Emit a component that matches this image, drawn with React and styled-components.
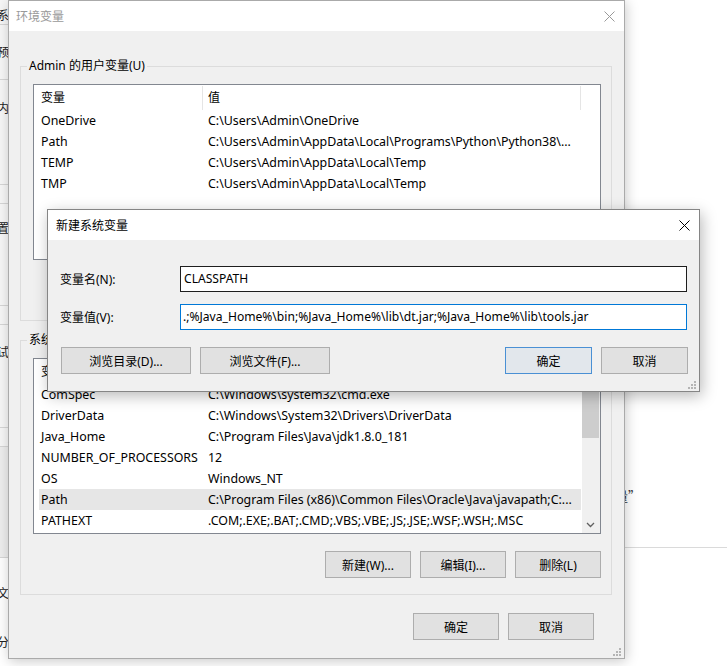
import React from "react";
import styled, { createGlobalStyle } from "styled-components";

const FONT = `"Noto Sans", "Noto Sans CJK SC", sans-serif`;

const GlobalStyle = createGlobalStyle`
  html, body { margin: 0; padding: 0; }
  body {
    background: #ffffff;
    font-family: ${FONT};
    font-size: 12px;
    color: #000;
  }
  * { box-sizing: border-box; }
`;

const Desktop = styled.div`
  position: relative;
  width: 727px;
  height: 666px;
  overflow: hidden;
  background: #ffffff;
`;

/* ---------- window behind everything ---------- */
const BackStrip = styled.div`
  position: absolute;
  left: -3px;
  top: 0;
  width: 40px;
  height: 666px;
  display: flex;
  flex-direction: column;
  font-family: "Noto Sans CJK SC", sans-serif;
  font-size: 12px;
  color: #222;
`;

const StripRow = styled.div`
  height: ${(p) => p.$h}px;
  flex-shrink: 0;
  padding-top: ${(p) => p.$pad || 0}px;
  line-height: 14px;
  background: ${(p) => p.$bg || "#f7f7f7"};
  border-bottom: ${(p) => (p.$line ? "1px solid #d6d6d6" : "none")};
  display: flex;
  flex-direction: column;
  gap: ${(p) => p.$gap || 0}px;
`;

const BackText = styled.div`
  position: absolute;
  left: 615px;
  top: 486px;
  font-family: "Noto Sans CJK SC", sans-serif;
  font-size: 13px;
  color: #333;
`;

const BackLine = styled.div`
  position: absolute;
  left: 600px;
  top: 547px;
  width: 140px;
  height: 1px;
  background: #dadada;
`;

/* ---------- windows ---------- */
const Window = styled.div`
  position: absolute;
  left: ${(p) => p.$x}px;
  top: ${(p) => p.$y}px;
  width: ${(p) => p.$w}px;
  height: ${(p) => p.$h}px;
  display: flex;
  flex-direction: column;
  background: #f0f0f0;
  border: 1px solid ${(p) => (p.$active ? "#858585" : "#aaaaaa")};
  box-shadow: ${(p) =>
    p.$active
      ? "2px 4px 14px rgba(0,0,0,0.28)"
      : "1px 2px 12px rgba(0,0,0,0.22)"};
`;

const TitleBar = styled.div`
  height: ${(p) => p.$h}px;
  flex-shrink: 0;
  background: #ffffff;
  display: flex;
  align-items: center;
  padding-left: ${(p) => p.$pad}px;
`;

const TitleText = styled.div`
  flex: 1;
  font-size: 12px;
  color: ${(p) => (p.$active ? "#000" : "#999")};
`;

const CloseBtn = styled.div`
  width: 30px;
  height: 100%;
  display: flex;
  align-items: center;
  justify-content: center;
`;

const CloseIcon = ({ color }) => (
  <svg width="11" height="11" viewBox="0 0 11 11">
    <path d="M0.5 0.5 L10.5 10.5 M10.5 0.5 L0.5 10.5" stroke={color} strokeWidth="1" fill="none" />
  </svg>
);

const Grip = styled.div`
  position: absolute;
  right: ${(p) => p.$r}px;
  bottom: ${(p) => p.$b}px;
  width: 8px;
  height: 8px;
  display: flex;
`;

const GripIcon = () => (
  <svg width="8" height="8" viewBox="0 0 8 8">
    <g fill="#b4b4b4">
      <rect x="6" y="0" width="2" height="2" />
      <rect x="3" y="3" width="2" height="2" />
      <rect x="6" y="3" width="2" height="2" />
      <rect x="0" y="6" width="2" height="2" />
      <rect x="3" y="6" width="2" height="2" />
      <rect x="6" y="6" width="2" height="2" />
    </g>
  </svg>
);

/* ---------- outer window body ---------- */
const OuterBody = styled.div`
  flex: 1;
  display: flex;
  flex-direction: column;
  padding: 27px 12px 0 11px;
`;

const Group = styled.fieldset`
  margin: ${(p) => p.$mt || 0}px 0 0 0;
  padding: 10px 10px ${(p) => p.$pb}px 12px;
  border: 1px solid #dcdcdc;
  min-width: 0;
  display: flex;
  flex-direction: column;
`;

const Legend = styled.legend`
  margin-left: -6px;
  padding: 0 2px;
  line-height: 16px;
  font-size: 12px;
  color: #000;
`;

const ListView = styled.div`
  width: 568px;
  height: 176px;
  border: 1px solid #828790;
  background: #ffffff;
  display: flex;
  overflow: hidden;
  flex-shrink: 0;
`;

const ListBody = styled.div`
  width: 548px;
  flex-shrink: 0;
  display: flex;
  flex-direction: column;
  overflow: hidden;
`;

const HeaderRow = styled.div`
  height: 25px;
  flex-shrink: 0;
  display: flex;
`;

const HeaderCell = styled.div`
  width: ${(p) => p.$w}px;
  flex-shrink: 0;
  padding-left: ${(p) => p.$pad}px;
  padding-top: 0;
  line-height: 23px;
  border-right: 1px solid #e5e5e5;
  margin: 1px 0 0 0;
`;

const Row = styled.div`
  height: 21px;
  flex-shrink: 0;
  width: 542px;
  margin-left: 5px;
  display: flex;
  font-size: 12.4px;
  line-height: 21px;
  white-space: nowrap;
  background: ${(p) => (p.$selected ? "#e6e6e6" : "transparent")};
`;

const NameCell = styled.div`
  width: 164px;
  flex-shrink: 0;
  padding-left: 2px;
  overflow: hidden;
`;

const ValueCell = styled.div`
  flex: 1;
  min-width: 0;
  padding-left: 5px;
  overflow: hidden;
`;

const ScrollBar = styled.div`
  width: 18px;
  flex-shrink: 0;
  background: #f0f0f0;
  display: flex;
  flex-direction: column;
  padding-right: 1px;
`;

const ScrollArrow = styled.div`
  height: 17px;
  flex-shrink: 0;
  display: flex;
  align-items: center;
  justify-content: center;
`;

const ScrollTrack = styled.div`
  flex: 1;
  display: flex;
  flex-direction: column;
`;

const Thumb = styled.div`
  height: ${(p) => p.$size}px;
  background: #cdcdcd;
`;

const Chevron = ({ up }) => (
  <svg width="9" height="6" viewBox="0 0 9 6">
    <path
      d={up ? "M1 5 L4.5 1.5 L8 5" : "M1 1 L4.5 4.5 L8 1"}
      stroke="#606060"
      strokeWidth="1.3"
      fill="none"
    />
  </svg>
);

const ButtonRow = styled.div`
  display: flex;
  justify-content: flex-end;
  gap: ${(p) => p.$gap}px;
  margin-top: ${(p) => p.$mt}px;
  padding-right: ${(p) => p.$pr || 0}px;
  padding-left: ${(p) => p.$pl || 0}px;
  flex-shrink: 0;
`;

const Button = styled.div`
  width: ${(p) => p.$w}px;
  height: 27px;
  flex-shrink: 0;
  display: flex;
  align-items: center;
  justify-content: center;
  font-size: 12px;
  color: #000;
  background: ${(p) => (p.$default ? "#e2e7ec" : "#e1e1e1")};
  border: 1px solid ${(p) => (p.$default ? "#4a90d4" : "#adadad")};
  white-space: nowrap;
`;

const Spacer = styled.div`
  flex: 1;
`;

/* ---------- dialog body ---------- */
const DialogBody = styled.div`
  flex: 1;
  display: flex;
  flex-direction: column;
  padding: 26px 11px 0 12px;
`;

const FieldRow = styled.div`
  display: flex;
  align-items: center;
  margin-top: ${(p) => p.$mt || 0}px;
`;

const FieldLabel = styled.div`
  width: 120px;
  flex-shrink: 0;
  font-size: 12px;
`;

const TextBox = styled.div`
  width: 507px;
  height: 26px;
  background: #ffffff;
  border: 1px solid ${(p) => (p.$focused ? "#0078d7" : "#1e1e1e")};
  padding-left: ${(p) => p.$pad}px;
  font-size: 12.1px;
  line-height: 24px;
  white-space: nowrap;
  overflow: hidden;
`;

const userVars = [
  ["OneDrive", "C:\\Users\\Admin\\OneDrive"],
  ["Path", "C:\\Users\\Admin\\AppData\\Local\\Programs\\Python\\Python38\\..."],
  ["TEMP", "C:\\Users\\Admin\\AppData\\Local\\Temp"],
  ["TMP", "C:\\Users\\Admin\\AppData\\Local\\Temp"],
];

const sysVars = [
  ["ComSpec", "C:\\Windows\\system32\\cmd.exe"],
  ["DriverData", "C:\\Windows\\System32\\Drivers\\DriverData"],
  ["Java_Home", "C:\\Program Files\\Java\\jdk1.8.0_181"],
  ["NUMBER_OF_PROCESSORS", "12"],
  ["OS", "Windows_NT"],
  ["Path", "C:\\Program Files (x86)\\Common Files\\Oracle\\Java\\javapath;C:...", true],
  ["PATHEXT", ".COM;.EXE;.BAT;.CMD;.VBS;.VBE;.JS;.JSE;.WSF;.WSH;.MSC"],
  ["PROCESSOR_ARCHITECTURE", "AMD64"],
];

function VarList({ rows, scroll }) {
  return (
    <ListView>
      <ListBody>
        <HeaderRow>
          <HeaderCell $w={169} $pad={7}>变量</HeaderCell>
          <HeaderCell $w={378} $pad={5}>值</HeaderCell>
        </HeaderRow>
        {rows.map(([n, v, sel]) => (
          <Row key={n} $selected={sel}>
            <NameCell>{n}</NameCell>
            <ValueCell>{v}</ValueCell>
          </Row>
        ))}
      </ListBody>
      {scroll && (
        <ScrollBar>
          <ScrollArrow>
            <Chevron up />
          </ScrollArrow>
          <ScrollTrack>
            <Thumb $size={62} />
          </ScrollTrack>
          <ScrollArrow>
            <Chevron />
          </ScrollArrow>
        </ScrollBar>
      )}
    </ListView>
  );
}

export default function App() {
  return (
    <>
      <GlobalStyle />
      <Desktop>
        <BackStrip>
          <StripRow $h={25} $pad={8} $line>系</StripRow>
          <StripRow $h={55} $pad={20} $line>预</StripRow>
          <StripRow $h={105} $pad={21} $line>内</StripRow>
          <StripRow $h={19} $line />
          <StripRow $h={102} $pad={17} $line>置</StripRow>
          <StripRow $h={19} $line />
          <StripRow $h={103} $pad={20} $line>试</StripRow>
          <StripRow $h={19} $line />
          <StripRow $h={111} $bg="#eeeeee" $line />
          <StripRow $h={108} $pad={28} $gap={35} $bg="#ffffff">
            <span>文</span>
            <span>分</span>
          </StripRow>
        </BackStrip>
        <BackText>量”</BackText>
        <BackLine />

        <Window $x={8} $y={0} $w={617} $h={659}>
          <TitleBar $h={30} $pad={7}>
            <TitleText>环境变量</TitleText>
            <CloseBtn>
              <CloseIcon color="#999999" />
            </CloseBtn>
          </TitleBar>
          <OuterBody>
            <Group $pb={15}>
              <Legend>Admin 的用户变量(U)</Legend>
              <VarList rows={userVars} />
              <ButtonRow $gap={9} $mt={18}>
                <Button $w={86}>新建(N)...</Button>
                <Button $w={86}>编辑(E)...</Button>
                <Button $w={86}>删除(D)</Button>
              </ButtonRow>
            </Group>
            <Group $mt={11} $pb={16}>
              <Legend>系统变量(S)</Legend>
              <VarList rows={sysVars} scroll />
              <ButtonRow $gap={9} $mt={17}>
                <Button $w={86}>新建(W)...</Button>
                <Button $w={86}>编辑(I)...</Button>
                <Button $w={86}>删除(L)</Button>
              </ButtonRow>
            </Group>
            <ButtonRow $gap={9} $mt={18} $pr={18}>
              <Button $w={86}>确定</Button>
              <Button $w={86}>取消</Button>
            </ButtonRow>
          </OuterBody>
          <Grip $r={3} $b={2}>
            <GripIcon />
          </Grip>
        </Window>

        <Window $x={47} $y={209} $w={653} $h={183} $active>
          <TitleBar $h={30} $pad={8}>
            <TitleText $active>新建系统变量</TitleText>
            <CloseBtn>
              <CloseIcon color="#000000" />
            </CloseBtn>
          </TitleBar>
          <DialogBody>
            <FieldRow>
              <FieldLabel>变量名(N):</FieldLabel>
              <TextBox $pad={3}>CLASSPATH</TextBox>
            </FieldRow>
            <FieldRow $mt={12}>
              <FieldLabel>变量值(V):</FieldLabel>
              <TextBox $focused $pad={2}>
                .;%Java_Home%\bin;%Java_Home%\lib\dt.jar;%Java_Home%\lib\tools.jar
              </TextBox>
            </FieldRow>
            <ButtonRow $gap={9} $mt={17} $pl={1}>
              <Button $w={130}>浏览目录(D)...</Button>
              <Button $w={130}>浏览文件(F)...</Button>
              <Spacer />
              <Button $w={87} $default>确定</Button>
              <Button $w={87}>取消</Button>
            </ButtonRow>
          </DialogBody>
          <Grip $r={3} $b={2}>
            <GripIcon />
          </Grip>
        </Window>
      </Desktop>
    </>
  );
}
